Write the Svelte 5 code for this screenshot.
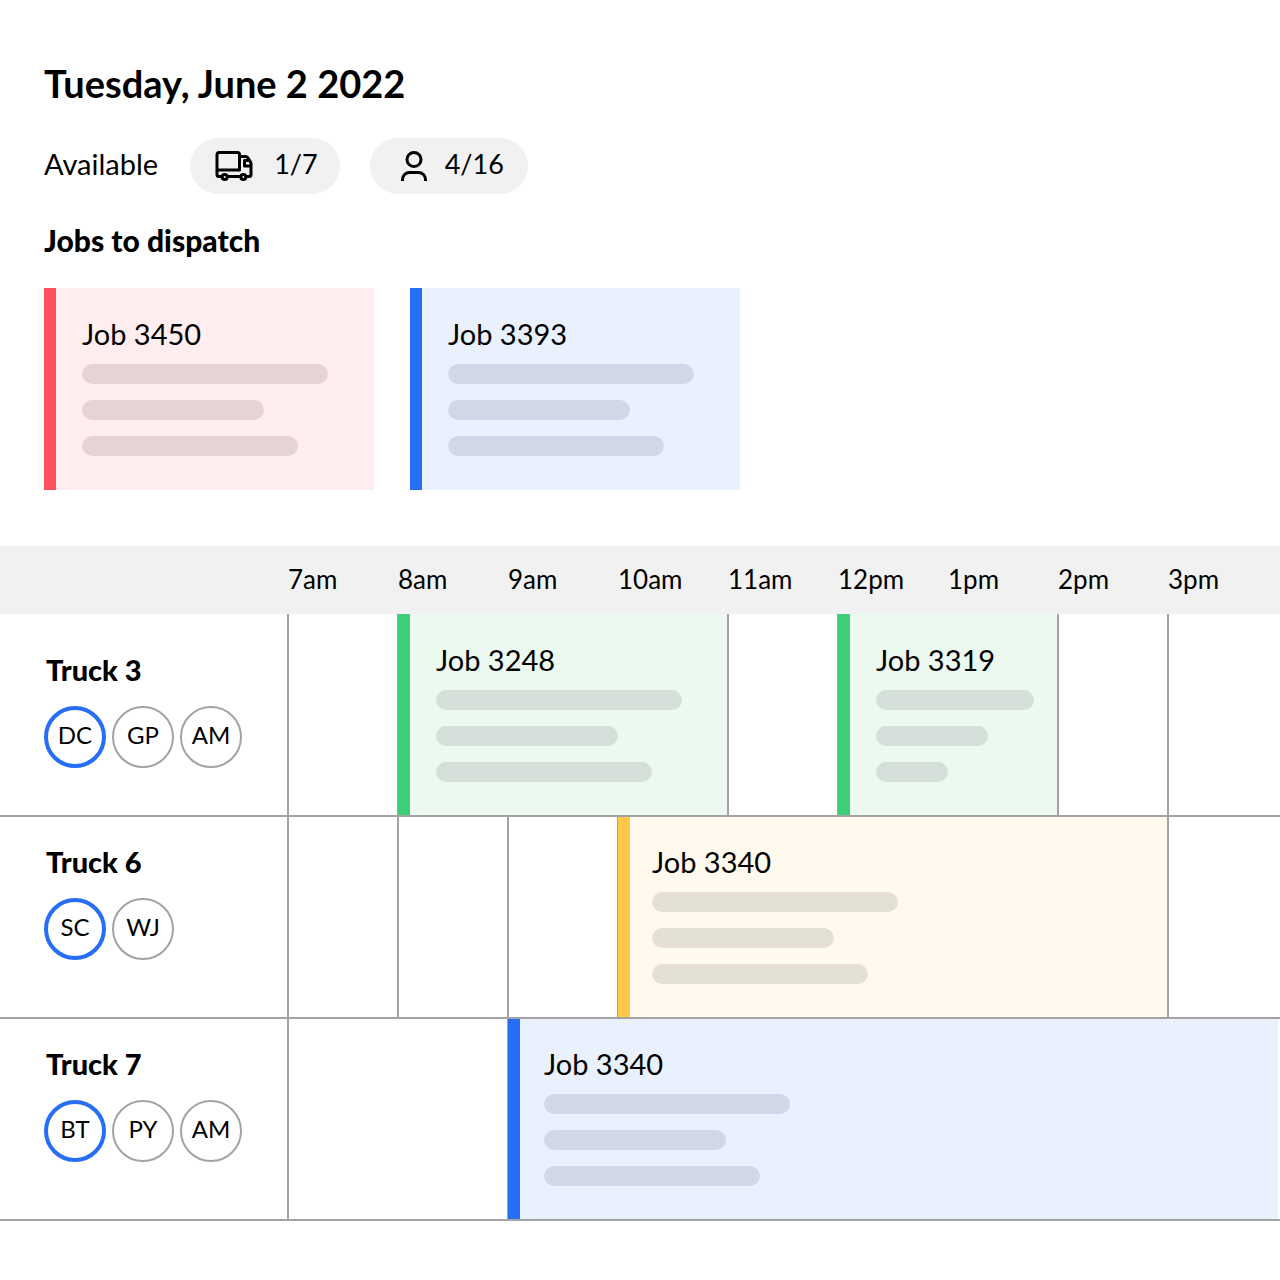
<script>
  const hours = ['7am', '8am', '9am', '10am', '11am', '12pm', '1pm', '2pm', '3pm'];
  const lines = [246, 182, 216];

  const queue = [
    { name: 'Job 3450', tone: 'red', lines },
    { name: 'Job 3393', tone: 'blue', lines }
  ];

  // Each slot spans a number of hours; slots without a job are free.
  const trucks = [
    {
      name: 'Truck 3',
      crew: ['DC', 'GP', 'AM'],
      slots: [
        { span: 1 },
        { span: 3, job: { name: 'Job 3248', tone: 'green', lines } },
        { span: 1 },
        { span: 2, job: { name: 'Job 3319', tone: 'green', lines: [158, 112, 72] } },
        { span: 1 },
        { span: 1 }
      ]
    },
    {
      name: 'Truck 6',
      crew: ['SC', 'WJ'],
      slots: [
        { span: 1 },
        { span: 1 },
        { span: 1 },
        { span: 5, job: { name: 'Job 3340', tone: 'yellow', lines } },
        { span: 1 }
      ]
    },
    {
      name: 'Truck 7',
      crew: ['BT', 'PY', 'AM'],
      slots: [
        { span: 2 },
        { span: 7, job: { name: 'Job 3340', tone: 'blue', lines } }
      ]
    }
  ];
</script>

{#snippet details(job)}
  <h3>{job.name}</h3>
  <div class="lines">
    {#each job.lines as width}
      <span class="line" style:width="{width}px"></span>
    {/each}
  </div>
{/snippet}

<main>
  <header>
    <h1>Tuesday, June 2 2022</h1>
    <div class="available">
      <span class="caption">Available</span>
      <div class="pill trucks">
        <svg width="40" height="34" viewBox="0 0 40 34" aria-hidden="true">
          <path d="M8 27.500H5a2 2 0 0 1-2-2V5.500a2 2 0 0 1 2-2h18.500a2 2 0 0 1 2 2v15.500H3M13.500 27.500h13M25.500 7.500h6a3 3 0 0 1 2.700 1.700L36.500 13q.5 1 .5 2v10.500a2 2 0 0 1-2 2h-3M35 11.500h-4.500v5.500h6" />
          <circle cx="10.700" cy="28" r="2.500" />
          <circle cx="29.300" cy="28" r="2.500" />
        </svg>
        <span>1/7</span>
      </div>
      <div class="pill people">
        <svg width="30" height="34" viewBox="0 0 30 34" aria-hidden="true">
          <circle cx="15" cy="10.500" r="7" />
          <path d="M3.500 32v-1.500a7 7 0 0 1 7-7h9a7 7 0 0 1 7 7V32" />
        </svg>
        <span>4/16</span>
      </div>
    </div>
    <h2>Jobs to dispatch</h2>
    <div class="queue">
      {#each queue as job}
        <article class="card {job.tone}">{@render details(job)}</article>
      {/each}
    </div>
  </header>

  <table>
    <colgroup>
      <col class="truck-col" />
      {#each hours.slice(0, -1) as hour}<col />{/each}
      <col class="last-col" />
    </colgroup>
    <thead>
      <tr>
        <td></td>
        {#each hours as hour}<th scope="col">{hour}</th>{/each}
      </tr>
    </thead>
    <tbody>
      {#each trucks as truck}
        <tr>
          <th scope="row">
            <div class="truck-name">{truck.name}</div>
            <div class="crew">
              {#each truck.crew as member, i}
                <span class="member" class:lead={i === 0}>{member}</span>
              {/each}
            </div>
          </th>
          {#each truck.slots as slot}
            {#if slot.job}
              <td class="job {slot.job.tone}" colspan={slot.span}>{@render details(slot.job)}</td>
            {:else}
              <td class="free" colspan={slot.span}></td>
            {/if}
          {/each}
        </tr>
      {/each}
    </tbody>
  </table>
</main>

<style>
  :global(body) {
    margin: 0;
    background: #fff;
  }
  main {
    font-family: Lato, 'Open Sans', sans-serif;
    font-size: 29px;
    line-height: 36px;
    color: #000;
  }
  header {
    padding: 61px 44px 56px;
  }
  h1,
  h2,
  h3 {
    margin: 0;
  }
  h1 {
    font-size: 38px;
    line-height: 44px;
    font-weight: 700;
  }
  .available {
    display: flex;
    align-items: center;
    gap: 30px;
    margin-top: 33px;
  }
  .pill {
    display: flex;
    align-items: center;
    box-sizing: border-box;
    height: 56px;
    border-radius: 28px;
    background: #f1f1f1;
  }
  .pill span,
  .caption {
    padding-bottom: 4px;
  }
  .caption {
    padding-right: 2px;
  }
  .pill span {
    font-size: 27px;
  }
  .trucks {
    gap: 20px;
    padding: 0 22px 0 24px;
  }
  .people {
    gap: 16px;
    padding: 0 24px 0 29px;
  }
  svg {
    display: block;
    fill: none;
    stroke: #000;
    stroke-width: 3;
    stroke-linejoin: round;
  }
  h2 {
    margin-top: 28px;
    font-size: 30px;
    line-height: 36px;
    font-weight: 900;
  }
  .queue {
    display: flex;
    gap: 36px;
    margin-top: 30px;
  }
  .card {
    box-sizing: border-box;
    width: 330px;
    padding: 28px 26px 34px;
    border-left: 12px solid var(--accent);
    background: var(--fill);
  }
  h3 {
    font-size: 29px;
    line-height: 36px;
    font-weight: 400;
  }
  .lines {
    display: flex;
    flex-direction: column;
    gap: 16px;
    margin-top: 12px;
  }
  .line {
    height: 20px;
    border-radius: 10px;
    background: rgb(0 0 0 / 10%);
  }
  .red {
    --accent: #ff5060;
    --fill: #ffedef;
  }
  .blue {
    --accent: #276ef6;
    --fill: #e9f0fe;
    --indent: 36px;
  }
  .green {
    --accent: #3dce78;
    --fill: #ebf9f1;
    --indent: 38px;
  }
  .yellow {
    --accent: #ffc847;
    --fill: #fffaed;
    --indent: 34px;
  }
  table {
    width: 100%;
    table-layout: fixed;
    border-collapse: separate;
    border-spacing: 0;
  }
  .truck-col {
    width: 287px;
  }
  .last-col {
    width: 113px;
  }
  td,
  th {
    box-sizing: border-box;
    padding: 0;
    text-align: left;
    vertical-align: top;
  }
  thead td,
  thead th {
    height: 68px;
    background: #f1f1f1;
    font-size: 26px;
    font-weight: 400;
    vertical-align: middle;
  }
  thead th {
    padding: 0 0 2px 1px;
  }
  tbody td,
  tbody th {
    height: 202px;
    border-bottom: 2px solid #a3a3a3;
  }
  tbody th {
    padding: 27px 0 0 44px;
  }
  tbody tr:first-child td,
  tbody tr:first-child th {
    height: 203px;
  }
  tbody tr:first-child th {
    padding-top: 38px;
  }
  .truck-name {
    padding-left: 2px;
    font-size: 29px;
    font-weight: 900;
  }
  .crew {
    display: flex;
    gap: 6px;
    margin-top: 18px;
  }
  .member {
    display: flex;
    align-items: center;
    justify-content: center;
    box-sizing: border-box;
    width: 62px;
    height: 62px;
    padding-bottom: 4px;
    border: 2px solid #a3a3a3;
    border-radius: 50%;
    font-size: 24px;
    font-weight: 400;
  }
  .lead {
    border: 4px solid #276ef6;
  }
  .free {
    border-left: 2px solid #a3a3a3;
  }
  .job {
    padding: 27px 0 0 var(--indent);
    border-left: 1px solid #a3a3a3;
    background: var(--fill);
    box-shadow: inset 12px 0 var(--accent);
  }
  tr:first-child .job {
    padding-top: 28px;
  }
  .job.blue {
    box-shadow:
      inset 12px 0 var(--accent),
      inset -2px 0 #fff;
  }
</style>
